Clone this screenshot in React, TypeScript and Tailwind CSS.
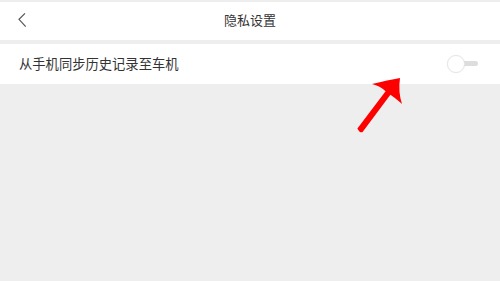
import React from "react";

const font = { fontFamily: '"Noto Sans CJK SC", "Noto Sans", sans-serif' };

const Toggle = () => (
  <div className="relative w-[31px] h-[18px]">
    <div className="absolute left-[4px] right-0 top-[6px] h-[5px] rounded-full bg-[#dddddd]" />
    <div className="absolute left-0 top-0 w-[18px] h-[18px] rounded-full bg-white border border-[#e6e6e6] shadow-[0_0_1px_rgba(0,0,0,0.08)]" />
  </div>
);

export default function App() {
  return (
    <div className="relative w-full h-[281px] bg-[#eeeeee] pt-[2px] overflow-hidden" style={font}>
      {/* Header */}
      <div className="relative h-[38px] bg-white flex items-center justify-center">
        <svg className="absolute left-[17px] top-[9px]" width="12" height="18" viewBox="0 0 12 18">
          <path d="M8 2.3 L2 8.3 L8.7 15.7" fill="none" stroke="#555555" strokeWidth="1.2" />
        </svg>
        <span className="text-[13px] text-[#333333] leading-none -mt-[3px]">隐私设置</span>
      </div>

      {/* Row */}
      <div className="mt-[4px] h-[40px] bg-white flex items-center justify-between pl-[19px] pr-[22px]">
        <span className="text-[13.3px] text-[#333333] leading-none">从手机同步历史记录至车机</span>
        <Toggle />
      </div>

      {/* Annotation arrow */}
      <svg className="absolute inset-0 pointer-events-none" width="500" height="281" viewBox="0 0 500 281">
        <path
          d="M357.4 128.4 L385.6 91.2 Q380 86 372 84 Q388 80 400 78 Q398 92 402 104 Q394 97 390.4 94.8 L362.6 132 Q360 133.5 357.4 128.4 Z"
          fill="#ff0000"
        />
      </svg>
    </div>
  );
}
